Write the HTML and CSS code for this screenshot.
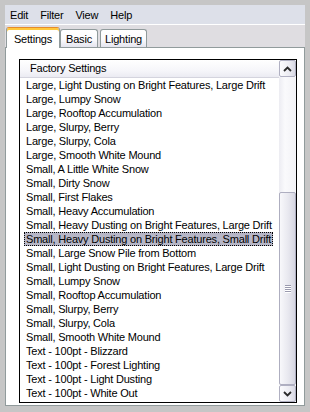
FILE: index.html
```html
<!DOCTYPE html>
<html>
<head>
<meta charset="utf-8">
<link rel="stylesheet" href="styles.css">
</head>
<body>
<div class="window">
  <div class="menubar">
    <span class="menu">Edit</span>
    <span class="menu">Filter</span>
    <span class="menu">View</span>
    <span class="menu">Help</span>
  </div>
  <div class="tabstrip">
    <div class="tab active">Settings</div>
    <div class="tab basic">Basic</div>
    <div class="tab lighting">Lighting</div>
  </div>
  <div class="panel">
    <div class="listbox">
      <div class="listcontent">
        <div class="header">Factory Settings</div>
        <ul class="items">
          <li><span>Large, Light Dusting on Bright Features, Large Drift</span></li>
          <li><span>Large, Lumpy Snow</span></li>
          <li><span>Large, Rooftop Accumulation</span></li>
          <li><span>Large, Slurpy, Berry</span></li>
          <li><span>Large, Slurpy, Cola</span></li>
          <li><span>Large, Smooth White Mound</span></li>
          <li><span>Small, A Little White Snow</span></li>
          <li><span>Small, Dirty Snow</span></li>
          <li><span>Small, First Flakes</span></li>
          <li><span>Small, Heavy Accumulation</span></li>
          <li><span>Small, Heavy Dusting on Bright Features, Large Drift</span></li>
          <li class="selected"><span>Small, Heavy Dusting on Bright Features, Small Drift</span></li>
          <li><span>Small, Large Snow Pile from Bottom</span></li>
          <li><span>Small, Light Dusting on Bright Features, Large Drift</span></li>
          <li><span>Small, Lumpy Snow</span></li>
          <li><span>Small, Rooftop Accumulation</span></li>
          <li><span>Small, Slurpy, Berry</span></li>
          <li><span>Small, Slurpy, Cola</span></li>
          <li><span>Small, Smooth White Mound</span></li>
          <li><span>Text - 100pt - Blizzard</span></li>
          <li><span>Text - 100pt - Forest Lighting</span></li>
          <li><span>Text - 100pt - Light Dusting</span></li>
          <li><span>Text - 100pt - White Out</span></li>
        </ul>
      </div>
      <div class="scrollbar">
        <div class="sb-btn">
          <svg width="9" height="6" viewBox="0 0 9 6"><path d="M1 5 L4.5 1.5 L8 5" stroke="#2a2a2a" stroke-width="1.8" fill="none"/></svg>
        </div>
        <div class="sb-track">
          <div class="sb-thumb"><div class="grip"></div></div>
        </div>
        <div class="sb-btn">
          <svg width="9" height="6" viewBox="0 0 9 6"><path d="M1 1 L4.5 4.5 L8 1" stroke="#2a2a2a" stroke-width="1.8" fill="none"/></svg>
        </div>
      </div>
    </div>
  </div>
</div>
</body>
</html>
```

FILE: styles.css
```css
html, body {
  margin: 0;
  padding: 0;
}
body {
  width: 310px;
  height: 412px;
  overflow: hidden;
  background: #c6c6c6;
  font-family: "Liberation Sans", Arial, sans-serif;
  font-size: 11px;
  letter-spacing: -0.2px;
  color: #000;
}
.window {
  margin: 5px 5px 0 5px;
  width: 300px;
}
.menubar {
  height: 19px;
  background: #dde0e9;
  border-bottom: 1px solid #ffffff;
  display: flex;
  align-items: center;
  padding-left: 5px;
  gap: 12px;
}
.tabstrip {
  height: 22px;
  background: #dfdde1;
  border-bottom: 1px solid #919b9c;
  display: flex;
  align-items: flex-end;
  padding-left: 1px;
}
.tab {
  box-sizing: border-box;
  height: 18px;
  border: 1px solid #919b9c;
  border-bottom: none;
  border-radius: 3px 3px 0 0;
  background: linear-gradient(#ffffff, #fbfbfd 55%, #e4e4ee);
  display: flex;
  align-items: center;
  justify-content: center;
  padding-top: 1px;
}
.tab.active {
  width: 54px;
  height: 21px;
  margin-bottom: -1px;
  background: #ffffff;
  border-top: 1px solid #e68b2c;
  box-shadow: inset 0 2px 0 #ffc83c;
  position: relative;
  padding-top: 2px;
}
.tab.basic {
  width: 38px;
}
.tab.lighting {
  width: 47px;
  margin-left: 2px;
}
.panel {
  background: #ffffff;
  border-left: 1px solid #919b9c;
  border-right: 1px solid #919b9c;
  border-bottom: 1px solid #919b9c;
  padding: 11px 7px 2px 13px;
}
.listbox {
  box-sizing: border-box;
  height: 344px;
  border: 1px solid #000;
  display: flex;
  background: #fff;
}
.listcontent {
  flex: 1;
  overflow: hidden;
}
.header {
  height: 17px;
  line-height: 17px;
  border-bottom: 1px solid #d4d4de;
  background: linear-gradient(#ffffff, #f6f6fa 60%, #ebebf2);
  padding-left: 10px;
}
.items {
  list-style: none;
  margin: 0;
  padding: 0;
}
.items li {
  height: 14px;
  line-height: 14px;
  padding-left: 4px;
  white-space: nowrap;
}
.items li span {
  display: inline-block;
  height: 14px;
  padding: 0 2px;
}
.items li.selected span {
  background: #b6b6c6;
  outline: 1px dotted #000;
  outline-offset: -1px;
}
.scrollbar {
  width: 17px;
  display: flex;
  flex-direction: column;
}
.sb-btn {
  box-sizing: border-box;
  height: 17px;
  border: 1px solid #b0b0c2;
  border-radius: 2px;
  background: linear-gradient(to right, #fbfbfd, #ececf2 60%, #d8d8e4);
  display: flex;
  align-items: center;
  justify-content: center;
}
.sb-track {
  flex: 1;
  display: flex;
  flex-direction: column;
  background: linear-gradient(to right, #ececf2, #fafafc 35%, #f2f2f6);
}
.sb-thumb {
  box-sizing: border-box;
  margin-top: 115px;
  height: 193px;
  border: 1px solid #aeaec0;
  border-radius: 2px;
  background: linear-gradient(to right, #f8f8fb, #e8e8ef 55%, #d6d6e2);
  display: flex;
  align-items: center;
  justify-content: center;
}
.grip {
  width: 6px;
  height: 8px;
  background: repeating-linear-gradient(#9a9aae 0 1px, #ffffff 1px 2px);
}
```
